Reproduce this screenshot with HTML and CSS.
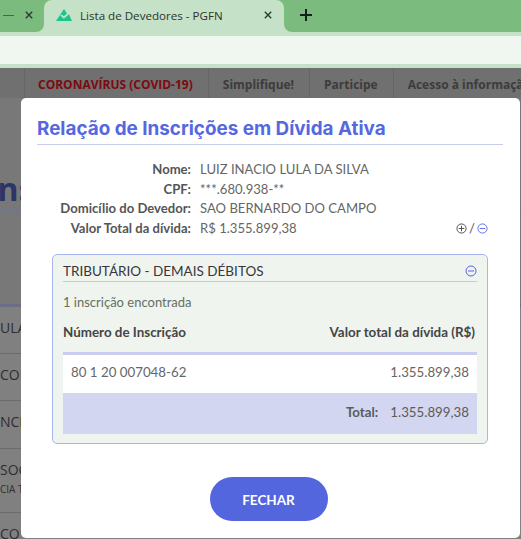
FILE: index.html
```html
<!DOCTYPE html>
<html lang="pt-BR">
<head>
<meta charset="utf-8">
<title>Lista de Devedores - PGFN</title>
<link rel="stylesheet" href="styles.css">
</head>
<body>
<div class="tabstrip">
  <div class="prev-tab">
    <span class="prev-title"></span>
    <svg class="close" viewBox="0 0 10 10"><path d="M1 1l8 8M9 1l-8 8"/></svg>
  </div>
  <div class="tab-wrap">
    <div class="tab">
      <svg class="favicon" viewBox="0 0 16 12"><path d="M8 0l3 4.6-3.2 2.6L5.6 5.400 4.300 6.600 7.800 9.800 13 5.300 16 12H0z"/></svg>
      <span class="tab-title">Lista de Devedores - PGFN</span>
      <svg class="close" viewBox="0 0 10 10"><path d="M1 1l8 8M9 1l-8 8"/></svg>
    </div>
  </div>
  <div class="strip-fill">
    <svg class="plus" viewBox="0 0 12 12"><path d="M6 0v12M0 6h12"/></svg>
  </div>
</div>
<div class="toolbar"></div>
<div class="page">
  <nav class="nav">
    <a class="nav-item covid">CORONAVÍRUS (COVID-19)</a>
    <a class="nav-item">Simplifique!</a>
    <a class="nav-item">Participe</a>
    <a class="nav-item">Acesso à informação</a>
  </nav>
  <div class="backdrop-head"><span class="backdrop-title">Inscrições</span></div>
  <ul class="backdrop-list">
    <li>ULA</li>
    <li>CONS</li>
    <li class="mid">NCE</li>
    <li class="tall">SOC<small>CIA T</small></li>
    <li>COU</li>
  </ul>
  <section class="modal">
    <h1 class="modal-title">Relação de Inscrições em Dívida Ativa</h1>
    <dl class="info">
      <dt>Nome:</dt><dd>LUIZ INACIO LULA DA SILVA</dd>
      <dt>CPF:</dt><dd>***.680.938-**</dd>
      <dt>Domicílio do Devedor:</dt><dd>SAO BERNARDO DO CAMPO</dd>
      <dt>Valor Total da dívida:</dt>
      <dd class="info-value">R$ 1.355.899,38
        <span class="toggles">
          <svg class="ic ic-dark" viewBox="0 0 12 12"><circle cx="6" cy="6" r="5"/><path d="M3 6h6M6 3v6"/></svg>
          <span class="slash">/</span>
          <svg class="ic" viewBox="0 0 12 12"><circle cx="6" cy="6" r="5"/><path d="M3 6h6"/></svg>
        </span>
      </dd>
    </dl>
    <div class="panel">
      <div class="panel-head">
        <h2>TRIBUTÁRIO - DEMAIS DÉBITOS</h2>
        <svg class="ic ic-big" viewBox="0 0 12 12"><circle cx="6" cy="6" r="5"/><path d="M3 6h6"/></svg>
      </div>
      <p class="count">1 inscrição encontrada</p>
      <div class="cols"><span>Número de Inscrição</span><span>Valor total da dívida (R$)</span></div>
      <div class="row"><span>80 1 20 007048-62</span><span>1.355.899,38</span></div>
      <div class="total"><b>Total:</b><span>1.355.899,38</span></div>
    </div>
    <div class="actions"><button class="btn">FECHAR</button></div>
  </section>
</div>
</body>
</html>
```
FILE: styles.css
```css
* { box-sizing: border-box; }
html, body { margin: 0; height: 539px; overflow: hidden; }
body { font-family: "Lato", "Open Sans", sans-serif; background: #777; }

.tabstrip { height: 36px; background: #c5e1c7; display: flex; align-items: flex-start; }
.prev-tab { width: 44px; height: 32px; background: #7bbc7e; display: flex; align-items: center; justify-content: flex-end; padding: 0 11px 2px 0; gap: 11px; border-bottom-right-radius: 8px; }
.prev-title { width: 11px; height: 1px; background: #3f6a44; }
.close { width: 8px; height: 8px; fill: none; stroke: #2a3a2c; stroke-width: 1.7; flex: none; }
.tab-wrap { width: 240px; height: 36px; background: linear-gradient(#7bbc7e 10px, transparent 10px); }
.tab { height: 36px; background: #c5e1c7; border-radius: 8px 8px 0 0; display: flex; align-items: center; padding: 0 12px 6px 12px; }
.favicon { width: 16px; height: 12px; fill: #19c58b; flex: none; margin-right: 8px; }
.tab-title { font: 11.6px "Open Sans", sans-serif; color: #2b352c; flex: 1; white-space: nowrap; }
.strip-fill { flex: 1; height: 32px; background: #7bbc7e; border-bottom-left-radius: 8px; padding: 9px 0 0 16px; }
.plus { display: block; width: 12px; height: 12px; fill: none; stroke: #16201a; stroke-width: 2; }

.toolbar { height: 28px; background: #f0f7f1; }

.page { position: relative; height: 475px; background: #808080; border-top: 4px solid #c5e1c7; overflow: hidden; }
.nav { height: 30px; background: #707070; display: flex; padding-left: 24px; font: 700 12px "Open Sans", sans-serif; color: #3c3c3c; white-space: nowrap; }
.nav-item { padding: 8px 15px 0 14px; border-left: 1px solid #666; }
.covid { color: #7c0a10; padding: 8px 15px 0 13px; }

.backdrop-head { height: 209px; background: #787878; border-bottom: 3px solid #6a6d85; position: relative; overflow: hidden; }
.backdrop-head::after { content: ""; position: absolute; left: 0; right: 0; top: 112px; height: 1px; background: #6f7490; }
.backdrop-title { position: absolute; left: -13px; top: 69px; font: 700 32px "Open Sans", sans-serif; color: #2c3468; white-space: nowrap; }
.backdrop-list { list-style: none; margin: 0; padding: 0; width: 21px; overflow: hidden; font: 14px "Open Sans", sans-serif; color: #2e2e2e; }
.backdrop-list li { height: 47px; border-bottom: 1px solid #6b6b6b; padding-top: 11px; white-space: nowrap; }
.backdrop-list .mid { height: 48px; }
.backdrop-list .tall { height: 64px; }
.backdrop-list small { display: block; font-size: 10px; margin-top: 3px; }

.modal { position: absolute; left: 21px; top: 30px; width: 499px; height: 440px; background: #fff; border-radius: 5px; padding: 19px 17px 0 16px; color: #555; }
.modal-title { margin: 0; height: 28px; font: 700 18.85px/24px "Inter", sans-serif; color: #5668e0; border-bottom: 1px solid #c9cdec; white-space: nowrap; }

.info { display: grid; grid-template-columns: 154px 1fr; column-gap: 9px; margin: 15px 0 0; font-size: 13.1px; line-height: 19.6px; }
.info dt { text-align: right; font-weight: 700; color: #555; white-space: nowrap; }
.info dd { margin: 0; color: #666; white-space: nowrap; }
.info-value { display: flex; justify-content: space-between; align-items: center; padding-right: 15px; }
.toggles { display: flex; align-items: center; gap: 2px; }
.slash { color: #555; }
.ic { width: 11px; height: 11px; fill: none; stroke: #5668e0; stroke-width: 1; flex: none; }
.ic-dark { stroke: #444; }
.ic-big { width: 12px; height: 12px; }

.panel { margin: 16px 0 0 15px; width: 436px; height: 190px; background: #eff4ef; border: 1px solid #a9b4ec; border-radius: 5px; padding: 0 10px; }
.panel-head { height: 27px; border-bottom: 1px solid #c3c9ea; display: flex; align-items: center; justify-content: space-between; padding-top: 6px; }
.panel-head h2 { margin: 0; font-size: 13.5px; font-weight: 400; color: #36363c; white-space: nowrap; }
.count { margin: 11px 0 0; font-size: 13px; line-height: 18px; color: #66705f; }
.cols { display: flex; justify-content: space-between; margin-top: 12px; padding-right: 2px; font-size: 13.4px; font-weight: 700; line-height: 18px; color: #454545; height: 29px; }
.row { height: 41px; background: #fff; border-top: 3px solid #c9cdf0; display: flex; justify-content: space-between; align-items: center; padding: 0 8px 4px; font-size: 13.3px; color: #666; }
.total { height: 41px; background: #d2d6f0; display: flex; justify-content: flex-end; align-items: center; gap: 12px; padding: 0 8px 3px; font-size: 13.3px; color: #5b5b5b; }

.actions { display: flex; justify-content: center; margin-top: 33px; padding-right: 3px; }
.btn { width: 118px; height: 44px; border: 0; border-radius: 22px; background: #5466de; color: #fff; font: 700 13.5px "Lato", sans-serif; padding-top: 2px; }
```
